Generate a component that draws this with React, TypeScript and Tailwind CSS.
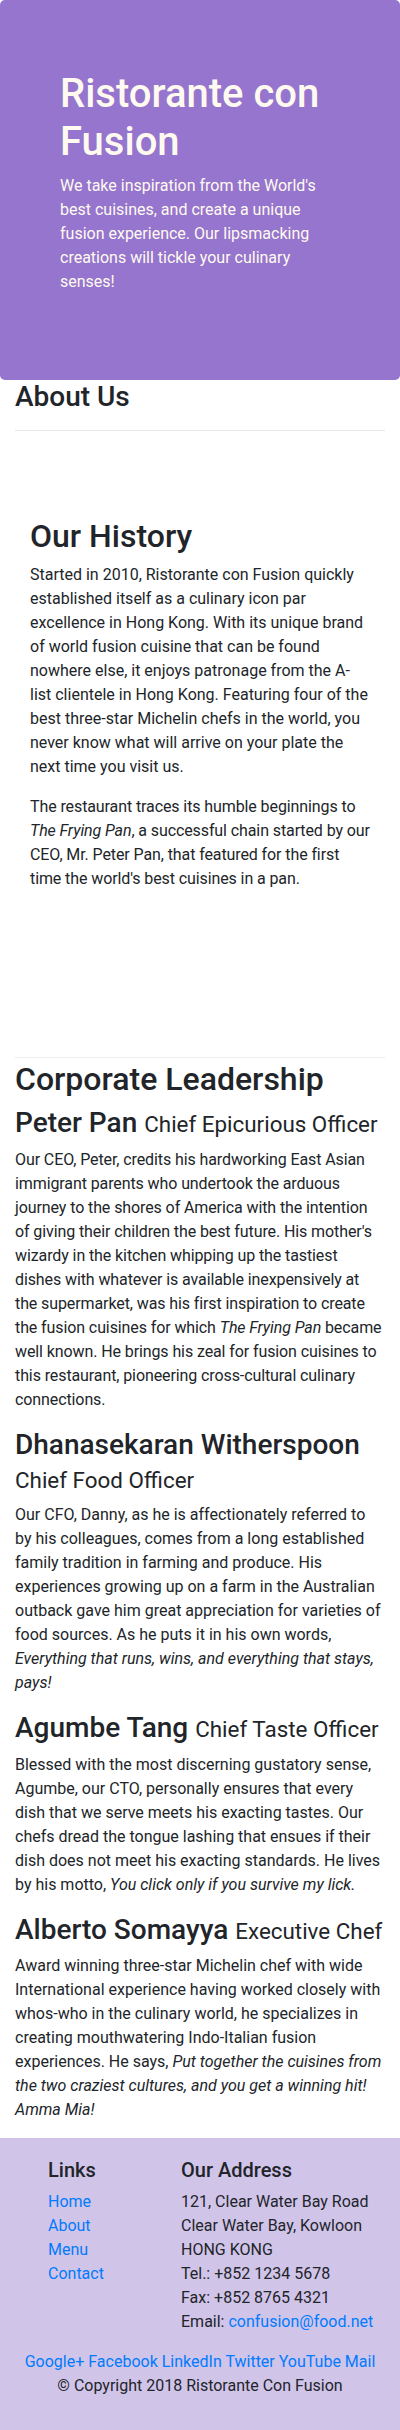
const leaders = [
  {
    name: 'Peter Pan',
    title: 'Chief Epicurious Officer',
    tight: true,
    body: (
      <>
        Our CEO, Peter, credits his hardworking East Asian immigrant parents who undertook the arduous
        journey to the shores of America with the intention of giving their children the best future. His
        mother's wizardy in the kitchen whipping up the tastiest dishes with whatever is available
        inexpensively at the supermarket, was his first inspiration to create the fusion cuisines for which{' '}
        <em>The Frying Pan</em> became well known. He brings his zeal for fusion cuisines to this restaurant,
        pioneering cross-cultural culinary connections.
      </>
    ),
  },
  {
    name: 'Dhanasekaran Witherspoon',
    title: 'Chief Food Officer',
    tight: false,
    body: (
      <>
        Our CFO, Danny, as he is affectionately referred to by his colleagues, comes from a long established
        family tradition in farming and produce. His experiences growing up on a farm in the Australian
        outback gave him great appreciation for varieties of food sources. As he puts it in his own words,{' '}
        <em>Everything that runs, wins, and everything that stays, pays!</em>
      </>
    ),
  },
  {
    name: 'Agumbe Tang',
    title: 'Chief Taste Officer',
    tight: false,
    body: (
      <>
        Blessed with the most discerning gustatory sense, Agumbe, our CTO, personally ensures that every
        dish that we serve meets his exacting tastes. Our chefs dread the tongue lashing that ensues if their
        dish does not meet his exacting standards. He lives by his motto,{' '}
        <em>You click only if you survive my lick.</em>
      </>
    ),
  },
  {
    name: 'Alberto Somayya',
    title: 'Executive Chef',
    tight: false,
    body: (
      <>
        Award winning three-star Michelin chef with wide International experience having worked closely with
        whos-who in the culinary world, he specializes in creating mouthwatering Indo-Italian fusion
        experiences. He says,{' '}
        <em>Put together the cuisines from the two craziest cultures, and you get a winning hit! Amma Mia!</em>
      </>
    ),
  },
];

export default function App() {
  return (
    <div className="font-['Roboto',sans-serif] text-[16px] leading-6 text-[#212529] bg-white">
      {/* header */}
      <div className="bg-[#9575cd] text-[#fffaf0] rounded-[5px] pt-[70px] pb-[70px] px-[60px]">
        <div className="w-[280px]">
          <h1 className="text-[40px] leading-[1.2] font-medium mb-2">Ristorante con Fusion</h1>
          <p className="mb-4">
            We take inspiration from the World's best cuisines, and create a unique fusion experience. Our
            lipsmacking creations will tickle your culinary senses!
          </p>
        </div>
      </div>

      <div className="px-[15px]">
        <h3 className="text-[28px] leading-[1.2] font-medium">About Us</h3>
        <hr className="mt-4 mb-4 border-t border-[#e6e6e6]" />
      </div>

      <div className="pl-[30px] pr-[26px] pt-[70px] pb-[166px]">
        <h2 className="text-[32px] leading-[1.2] font-medium mb-2">Our History</h2>
        <p className="mb-4 mr-1">
          Started in 2010, Ristorante con Fusion quickly established itself as a culinary icon par excellence
          in Hong Kong. With its unique brand of world fusion cuisine that can be found nowhere else, it enjoys
          patronage from the A-list clientele in Hong Kong. Featuring four of the best three-star Michelin
          chefs in the world, you never know what will arrive on your plate the next time you visit us.
        </p>
        <p className="tracking-[-0.1px]">
          The restaurant traces its humble beginnings to <em>The Frying Pan</em>, a successful chain started by
          our CEO, Mr. Peter Pan, that featured for the first time the world's best cuisines in a pan.
        </p>
      </div>

      <div className="px-[15px]">
        <hr className="border-t border-[#eeeeee]" />
        <h2 className="text-[32px] leading-[1.2] font-medium mt-[2px] mb-2">Corporate Leadership</h2>
        <ul>
          {leaders.map((l) => (
            <li key={l.name}>
              <h3 className="text-[28px] leading-[1.2] font-medium mb-2">
                {l.name} <small className="text-[22.4px] font-normal">{l.title}</small>
              </h3>
              <p className={l.tight ? 'mb-4 tracking-[-0.1px]' : 'mb-4'}>{l.body}</p>
            </li>
          ))}
        </ul>
      </div>

      <footer className="bg-[#d1c4e9] pt-5 pb-5">
        <div className="flex">
          <div className="ml-[33px] w-[133px] px-[15px]">
            <h5 className="text-[20px] leading-[1.2] font-medium mb-2">Links</h5>
            <ul>
              {['Home', 'About', 'Menu', 'Contact'].map((x) => (
                <li key={x}>
                  <a href="#" className="text-[#007bff]">
                    {x}
                  </a>
                </li>
              ))}
            </ul>
          </div>
          <div className="flex-1 px-[15px]">
            <h5 className="text-[20px] leading-[1.2] font-medium mb-2">Our Address</h5>
            <address className="not-italic mb-4">
              121, Clear Water Bay Road
              <br />
              Clear Water Bay, Kowloon
              <br />
              HONG KONG
              <br />
              Tel.: +852 1234 5678
              <br />
              Fax: +852 8765 4321
              <br />
              Email:{' '}
              <a href="#" className="text-[#007bff]">
                confusion@food.net
              </a>
            </address>
          </div>
        </div>
        <div className="text-center text-[#007bff]">
          <a href="#">Google+</a> <a href="#">Facebook</a> <a href="#">LinkedIn</a> <a href="#">Twitter</a>{' '}
          <a href="#">YouTube</a> <a href="#">Mail</a>
        </div>
        <div className="text-center">
          <p className="mb-4">© Copyright 2018 Ristorante Con Fusion</p>
        </div>
      </footer>
    </div>
  );
}
